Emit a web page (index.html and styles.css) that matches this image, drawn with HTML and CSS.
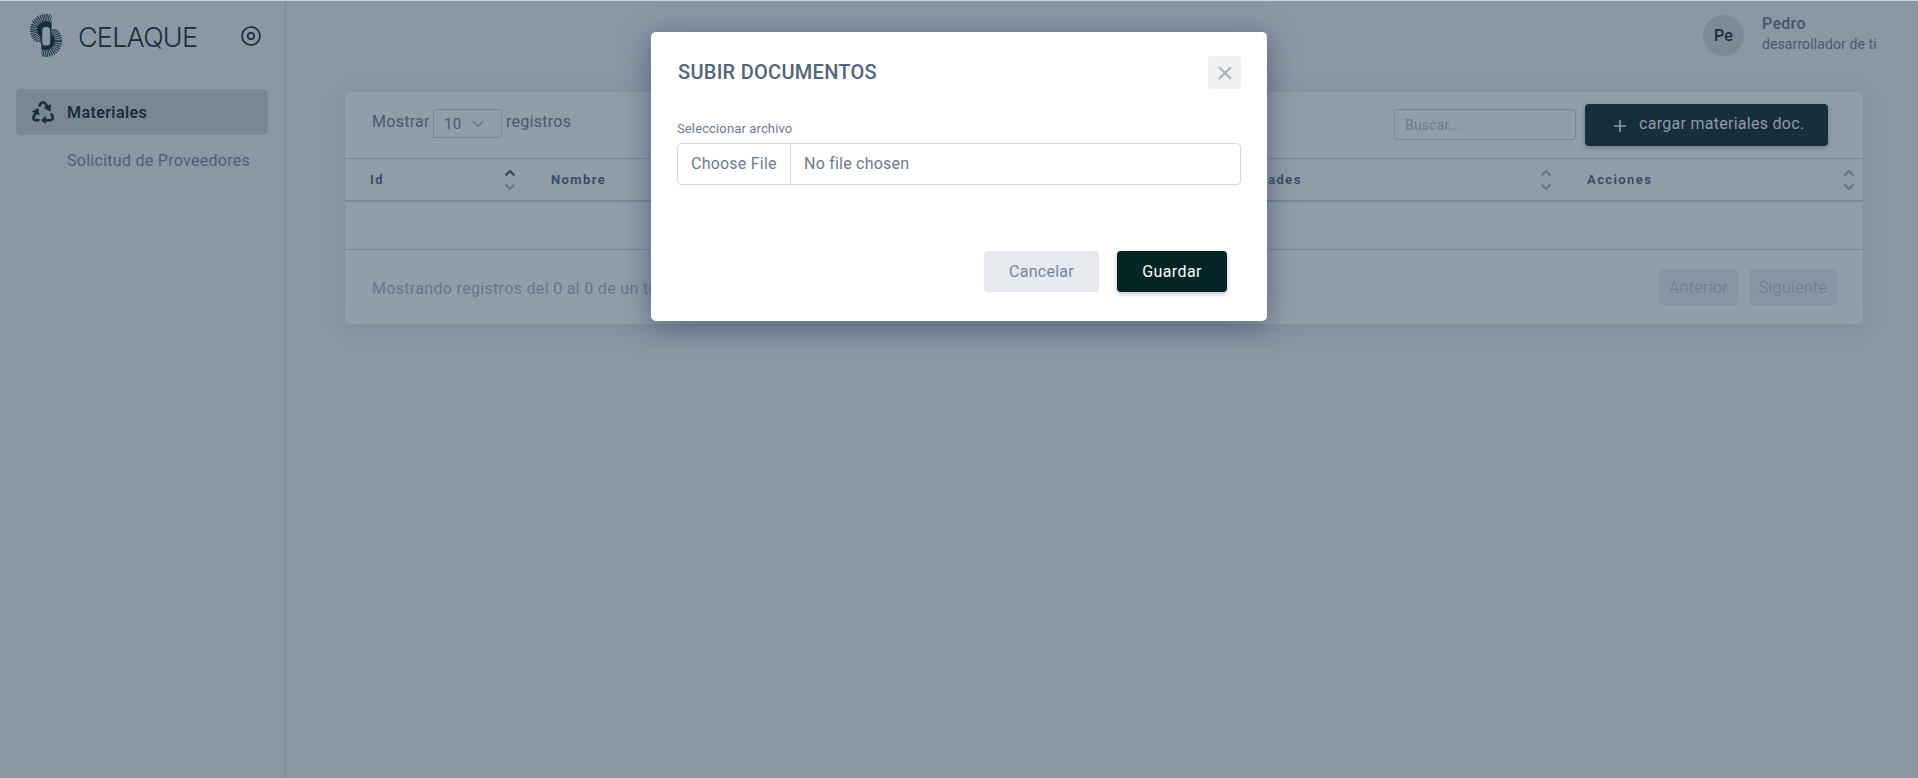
FILE: index.html
```html
<!DOCTYPE html>
<html lang="es">
<head>
<meta charset="utf-8">
<title>Celaque</title>
<link rel="stylesheet" href="styles.css">
</head>
<body>
<div class="app">
  <aside class="sidebar">
    <div class="brand">
      <svg class="brand-mark" viewBox="0 0 34 46" width="34" height="46">
        <clipPath id="fan-top"><path d="M0 0H22.500V16L12 30H0Z"/></clipPath>
        <clipPath id="fan-bottom"><path d="M34 46H12.500V32L22 17H34Z"/></clipPath>
        <g fill="none" stroke="#152f3c">
          <g clip-path="url(#fan-top)"><circle cx="17" cy="18" r="11.500" stroke-width="9" stroke-dasharray=".95 .86"/><circle cx="17" cy="18" r="6.500" stroke-width="5"/></g>
          <g clip-path="url(#fan-bottom)"><circle cx="17" cy="29" r="11.500" stroke-width="9" stroke-dasharray=".95 .86"/><circle cx="17" cy="29" r="6.500" stroke-width="5"/></g>
        </g>
        <rect x="11.500" y="12" width="11" height="23" rx="5.500" fill="#152f3c"/>
        <rect x="13.200" y="15" width="8" height="18.500" rx="3.500" fill="#8b97a5"/>
      </svg>
      <span class="brand-name">CELAQUE</span>
      <svg class="brand-toggle" viewBox="0 0 20 20" width="20" height="20" fill="none" stroke="#152f3c" stroke-width="1.7"><circle cx="10" cy="10" r="9"/><circle cx="10" cy="10" r="3.200"/></svg>
    </div>
    <nav class="menu">
      <a class="menu-item">
        <svg viewBox="0 0 24 24" width="24" height="24" fill="none" stroke="#152f3c" stroke-width="2.600">
          <path d="M8 6.500L9.500 3.800Q10.500 2.300 12 2.300T14.500 3.800L17 8.300"/><path d="M5.200 12L2.700 16.500Q1.500 20 5 20.300H8.500"/><path d="M13 20.300H19Q23 19.500 21.500 16L20 13.500"/>
          <path fill="#152f3c" stroke="none" d="M12.500 8L19.500 11.500L20 4ZM.8 11.500L7.200 8L8.500 15.500ZM15 15.800L10 20.300L15 24Z"/>
        </svg>
        <span>Materiales</span>
      </a>
      <a class="menu-sub">Solicitud de Proveedores</a>
    </nav>
  </aside>
  <main class="content">
    <header class="topbar">
      <div class="avatar">Pe</div>
      <div class="user"><div class="user-name">Pedro</div><div class="user-role">desarrollador de ti</div></div>
    </header>
    <section class="card">
      <div class="toolbar">
        <div class="length"><span class="t-show">Mostrar</span><span class="select"><span>10</span><svg viewBox="0 0 12 8" width="12" height="8" fill="none" stroke="#66768a" stroke-width="1.500"><path d="M.8 1L6 6.500L11.200 1"/></svg></span><span class="t-reg">registros</span></div>
        <div class="search">Buscar...</div>
        <div class="btn-upload"><svg viewBox="0 0 14 14" width="14" height="14" stroke="#8b97a5" stroke-width="1.700"><path d="M7 1V13M1 7H13"/></svg><span>cargar materiales doc.</span></div>
      </div>
      <div class="thead">
        <div class="th c1"><span>Id</span><svg class="sort asc" viewBox="0 0 12 22" width="12" height="22"><path d="M1.500 6.500L6 2L10.500 6.500"/><path d="M1.500 15.500L6 20L10.500 15.500"/></svg></div>
        <div class="th c2"><span>Nombre</span></div>
        <div class="th c3"><span>Unidades</span><svg class="sort" viewBox="0 0 12 22" width="12" height="22"><path d="M1.500 6.500L6 2L10.500 6.500"/><path d="M1.500 15.500L6 20L10.500 15.500"/></svg></div>
        <div class="th c4"><span>Acciones</span><svg class="sort" viewBox="0 0 12 22" width="12" height="22"><path d="M1.500 6.500L6 2L10.500 6.500"/><path d="M1.500 15.500L6 20L10.500 15.500"/></svg></div>
      </div>
      <div class="empty-row"></div>
      <div class="tfoot">
        <span class="info">Mostrando registros del 0 al 0 de un total de 0</span>
        <div class="pager"><span class="page prev">Anterior</span><span class="page next">Siguiente</span></div>
      </div>
    </section>
  </main>
</div>
<div class="modal">
  <div class="modal-head"><h2>SUBIR DOCUMENTOS</h2><span class="close"><svg viewBox="0 0 14 14" width="14" height="14" fill="none" stroke="#acb4bf" stroke-width="2.300" stroke-linecap="round"><path d="M1.700 1.700L12.300 12.300M12.300 1.700L1.700 12.300"/></svg></span></div>
  <div class="label">Seleccionar archivo</div>
  <div class="file"><span class="file-btn">Choose File</span><span class="file-name">No file chosen</span></div>
  <div class="actions"><span class="btn cancel">Cancelar</span><span class="btn save">Guardar</span></div>
</div>
</body>
</html>
```
FILE: styles.css
```css
* { box-sizing: border-box; }
body { margin: 0; height: 778px; overflow: hidden; background: #8b97a5; font: 16px/24px Roboto, sans-serif; letter-spacing: .28px; color: #475a70; white-space: nowrap; }
.app { display: flex; height: 778px; border-top: 1px solid #c9d3d3; }
.sidebar { width: 286px; border-right: 1px solid #7b8999; }
.brand { display: flex; align-items: center; height: 68px; padding-left: 29px; }
.brand-name { margin-left: 15px; width: 163px; font: 300 27px/32px Inter, sans-serif; letter-spacing: -.8px; color: #152f3c; padding-top: 6px; }
.brand-toggle { margin-top: 1px; }
.menu-item { display: flex; align-items: center; width: 252px; height: 46px; margin: 20px 0 0 16px; padding-left: 15px; border-radius: 5px; background: #7a8793; color: #152f3c; font-weight: 600; letter-spacing: .4px; }
.menu-item span { margin: 1px 0 0 12px; }
.menu-sub { display: block; margin: 14px 0 0 67px; color: #4d5f79; }
.content { flex: 1; padding-right: 55px; }
.topbar { display: flex; justify-content: flex-end; height: 91px; padding-top: 13px; }
.avatar { width: 41px; height: 41px; margin-top: 1px; border-radius: 50%; background: #7c8a97; color: #152f3c; font-weight: 500; line-height: 41px; text-align: center; }
.user { width: 101px; margin-left: 18px; }
.user-name { font-weight: 600; line-height: 20px; }
.user-role { font-size: 14px; line-height: 21px; letter-spacing: .1px; }
.card { width: 1518px; height: 232px; margin-left: 59px; border-radius: 5px; background: #919da9; box-shadow: 0 4px 24px rgba(60,75,100,.16); }
.toolbar { display: flex; height: 66px; padding: 12px 35px 0 27px; }
.length { display: flex; width: 1022px; padding-top: 5px; }
.t-show { width: 61px; padding-top: 1px; }
.select { display: flex; align-items: center; justify-content: space-between; width: 69px; height: 29px; padding: 0 17px 0 10px; border: 1px solid #798899; border-radius: 3px; font-size: 15px; }
.t-reg { margin-left: 4px; padding-top: 1px; }
.search { width: 182px; height: 31px; margin: 5px 9px 0 0; padding: 0 10px; border: 1px solid #798899; border-radius: 3px; font-size: 14px; line-height: 30px; letter-spacing: .2px; color: #6c7b8f; }
.btn-upload { display: flex; align-items: center; width: 243px; height: 42px; padding: 0 0 2px 28px; border-radius: 4px; background: #152f3c; color: #8f9ba7; box-shadow: 0 2px 5px rgba(30,50,70,.3); }
.btn-upload svg { margin: 4px 12px 0 0; }
.thead { display: flex; height: 44px; border-top: 1px solid #788899; border-bottom: 2px solid #788899; font-size: 13px; font-weight: 700; letter-spacing: 1.4px; color: #3a4d65; }
.th { display: flex; align-items: center; justify-content: space-between; padding-left: 25px; }
.c1 { width: 181px; padding-right: 10px; }
.c2 { width: 685px; }
.c3 { width: 351px; padding-right: 10px; }
.c4 { width: 301px; padding-right: 8px; }
.sort { fill: none; stroke: #65758b; stroke-width: 2.200; }
.asc path:first-child { stroke: #33475e; }
.empty-row { height: 48px; border-bottom: 1px solid #788899; }
.tfoot { display: flex; justify-content: space-between; padding: 19px 26px 0 27px; color: #66768b; }
.info { padding-top: 8px; letter-spacing: .32px; }
.pager { display: flex; gap: 11px; }
.page { height: 36px; border-radius: 4px; background: #8794a3; line-height: 37px; text-align: center; font-weight: 300; letter-spacing: .42px; color: #6b7b90; }
.prev { width: 79px; }
.next { width: 88px; }
.modal { position: absolute; left: 651px; top: 32px; width: 616px; height: 289px; padding: 24px 26px; border-radius: 5px; background: #fff; box-shadow: 0 5px 30px rgba(55,70,95,.65); color: #6b7b8f; }
.modal-head { display: flex; justify-content: space-between; height: 53px; }
.modal-head h2 { margin: 3px 0 0 1px; font: 500 20px/26px Roboto, sans-serif; color: #52657a; }
.close { display: flex; align-items: center; justify-content: center; width: 33px; height: 33px; border-radius: 4px; background: #eff0f2; }
.label { height: 34px; font-size: 13px; line-height: 39px; letter-spacing: .13px; }
.file { display: flex; height: 42px; border: 1px solid #d3d7df; border-radius: 4px; line-height: 39px; letter-spacing: .22px; }
.file-btn { width: 113px; padding-left: 13px; border-right: 1px solid #d3d7df; }
.file-name { padding-left: 13px; }
.actions { display: flex; justify-content: flex-end; gap: 18px; padding: 66px 14px 0 0; }
.btn { height: 41px; border-radius: 4px; line-height: 41px; text-align: center; }
.cancel { width: 115px; background: #e6e9ee; color: #7287a3; }
.save { width: 110px; background: #052425; color: #fff; letter-spacing: .4px; box-shadow: 0 2px 4px rgba(40,50,90,.3); }
```
